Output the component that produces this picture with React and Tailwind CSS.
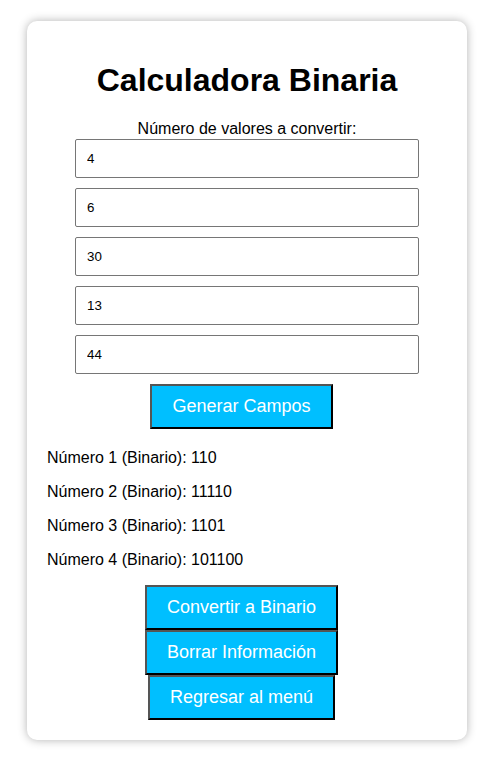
import React from 'react';

const values = ['4', '6', '30', '13', '44'];
const results = ['110', '11110', '1101', '101100'];

const Btn = ({ children, className = '' }) => (
  <button
    className={`block bg-[#00BFFF] text-white text-[18px] leading-[21px] px-5 py-[10px] border-2 border-t-[#555] border-l-[#555] border-b-black border-r-black mr-[11px] ${className}`}
  >
    {children}
  </button>
);

export default function App() {
  return (
    <div className="bg-white min-h-[759px] pt-[21px] font-['Liberation_Sans',Arial,sans-serif] text-black">
      <div className="ml-[27px] w-[440px] bg-white rounded-[10px] shadow-[0_0_10px_rgba(0,0,0,0.3)] p-5">
        <h1 className="text-center text-[32px] leading-[37px] font-bold mt-[21px] mb-[21px]">
          Calculadora Binaria
        </h1>
        <div className="flex flex-col items-center">
          <label className="text-[16px] leading-[18px] mb-px">Número de valores a convertir:</label>
          {values.map((v, i) => (
            <input
              key={i}
              defaultValue={v}
              className="w-[344px] h-[39px] mb-[10px] border border-[#767676] rounded-[2px] pl-[11px] text-[13.33px] bg-white"
            />
          ))}
          <Btn>Generar Campos</Btn>
        </div>

        {/* resultados */}
        <div className="mt-[20px] flex flex-col gap-4 text-[16px] leading-[18px]">
          {results.map((r, i) => (
            <p key={i}>
              Número {i + 1} (Binario): {r}
            </p>
          ))}
        </div>

        <div className="mt-[16px] flex flex-col items-center">
          <Btn>Convertir a Binario</Btn>
          <Btn>Borrar Información</Btn>
          <Btn>Regresar al menú</Btn>
        </div>
      </div>
    </div>
  );
}
